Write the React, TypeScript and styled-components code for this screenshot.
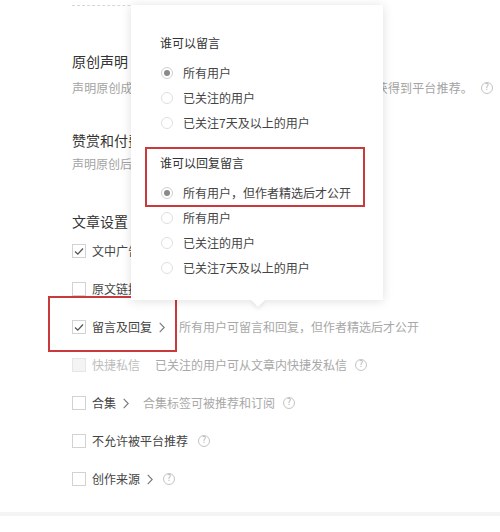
import React from "react";
import styled, { createGlobalStyle } from "styled-components";

const Global = createGlobalStyle`
  html, body { margin: 0; padding: 0; background: #fff; }
  body { font-family: "Noto Sans CJK SC", "Noto Sans", sans-serif; }
  * { box-sizing: border-box; }
`;

const Page = styled.div`
  position: relative;
  width: 500px;
  height: 532px;
  overflow: hidden;
  background: #fff;
`;

const Content = styled.div`
  padding-left: 72px;
  display: flex;
  flex-direction: column;
  align-items: flex-start;
`;

const TopLine = styled.div`
  width: 310px;
  height: 6px;
  border-bottom: 1px dashed #d6d6d6;
`;

const Title = styled.div<{ $mt: number }>`
  margin-top: ${(p) => p.$mt}px;
  font-size: 14px;
  line-height: 20px;
  color: #333;
`;

const Desc = styled.div<{ $mt: number; $ls?: number }>`
  margin-top: ${(p) => p.$mt}px;
  display: flex;
  align-items: center;
  font-size: 12px;
  line-height: 18px;
  letter-spacing: ${(p) => p.$ls ?? 0}px;
  color: #a3a3a3;
  white-space: nowrap;
`;

const Rows = styled.div`
  margin-top: 1px;
  display: flex;
  flex-direction: column;
`;

const Row = styled.div`
  position: relative;
  height: 38px;
  display: flex;
  align-items: center;
  white-space: nowrap;
`;

const Box = styled.span<{ $checked?: boolean; $disabled?: boolean }>`
  width: 14px;
  height: 14px;
  flex: none;
  border: 1px solid ${(p) => (p.$disabled ? "#e6e6e6" : "#d2d2d2")};
  background: ${(p) => (p.$disabled ? "#f4f4f4" : "#fff")};
  display: flex;
  align-items: center;
  justify-content: center;
`;

const Label = styled.span<{ $disabled?: boolean }>`
  margin-left: 6px;
  font-size: 12px;
  line-height: 18px;
  color: ${(p) => (p.$disabled ? "#bdbdbd" : "#444")};
`;

const RowDesc = styled.span<{ $ml: number }>`
  margin-left: ${(p) => p.$ml}px;
  font-size: 12px;
  line-height: 18px;
  color: #a8a8a8;
`;

const ChevronWrap = styled.span`
  margin-left: 7px;
  display: inline-flex;
  align-items: center;
`;

const Help = styled.span<{ $ml: number }>`
  margin-left: ${(p) => p.$ml}px;
  width: 12px;
  height: 12px;
  border: 1px solid #c4c4c4;
  border-radius: 50%;
  color: #b0b0b0;
  font-size: 8px;
  line-height: 10px;
  letter-spacing: 0;
  text-align: center;
  font-family: "DejaVu Sans", sans-serif;
  flex: none;
`;

const Highlight = styled.div<{ $top: number; $left: number; $w: number; $h: number }>`
  position: absolute;
  top: ${(p) => p.$top}px;
  left: ${(p) => p.$left}px;
  width: ${(p) => p.$w}px;
  height: ${(p) => p.$h}px;
  border: 2px solid #c93a3c;
  pointer-events: none;
`;

const Footer = styled.div`
  margin-top: 14px;
  height: 4px;
  background: #f4f4f4;
`;

const Popover = styled.div`
  position: absolute;
  left: 131px;
  top: 5px;
  width: 252px;
  padding: 29px 0 20px 29px;
  background: #fff;
  box-shadow: 0 1px 10px rgba(0, 0, 0, 0.13);
  display: flex;
  flex-direction: column;
`;

const Arrow = styled.div`
  position: absolute;
  left: 122px;
  bottom: -5px;
  width: 10px;
  height: 10px;
  background: #fff;
  transform: rotate(45deg);
  box-shadow: 2px 2px 4px rgba(0, 0, 0, 0.07);
`;

const Group = styled.div<{ $mt: number }>`
  position: relative;
  margin-top: ${(p) => p.$mt}px;
  display: flex;
  flex-direction: column;
`;

const GroupTitle = styled.div`
  font-size: 12px;
  line-height: 18px;
  color: #333;
  margin-bottom: 8px;
`;

const Option = styled.div`
  height: 25px;
  display: flex;
  align-items: center;
  font-size: 12px;
  color: #444;
  white-space: nowrap;
`;

const Radio = styled.span<{ $on?: boolean }>`
  width: 12px;
  height: 12px;
  margin-left: 1px;
  margin-right: 10px;
  border-radius: 50%;
  border: 1px solid ${(p) => (p.$on ? "#cfcfcf" : "#e0e0e0")};
  display: flex;
  align-items: center;
  justify-content: center;
  flex: none;
  &::after {
    content: "";
    width: 6px;
    height: 6px;
    border-radius: 50%;
    background: ${(p) => (p.$on ? "#8a8a8a" : "transparent")};
  }
`;

const Check = () => (
  <svg width="10" height="9" viewBox="0 0 10 9">
    <path d="M1 4.6 L3.8 7.2 L9 1.5" fill="none" stroke="#555" strokeWidth="1.3" />
  </svg>
);

const Chevron = () => (
  <ChevronWrap>
    <svg width="6" height="11" viewBox="0 0 6 11">
      <path d="M0.7 0.8 L5.2 5.5 L0.7 10.2" fill="none" stroke="#777" strokeWidth="1.1" />
    </svg>
  </ChevronWrap>
);

type Opt = { text: string; on?: boolean };

const RadioGroup = ({ title, options, mt, children }: { title: string; options: Opt[]; mt: number; children?: React.ReactNode }) => (
  <Group $mt={mt}>
    {children}
    <GroupTitle>{title}</GroupTitle>
    {options.map((o) => (
      <Option key={o.text}>
        <Radio $on={o.on} />
        {o.text}
      </Option>
    ))}
  </Group>
);

export default function App() {
  return (
    <Page>
      <Global />
      <Content>
        <TopLine />
        <Title $mt={45}>原创声明</Title>
        <Desc $mt={8} $ls={0.15}>
          声明原创成功后，文章将显示原创标识，且有更多的机会获得到平台推荐。
          <Help $ml={8}>?</Help>
        </Desc>
        <Title $mt={33}>赞赏和付费</Title>
        <Desc $mt={5}>声明原创后可开启赞赏和付费功能</Desc>
        <Title $mt={38}>文章设置</Title>
        <Rows>
          <Row>
            <Box $checked><Check /></Box>
            <Label>文中广告</Label>
          </Row>
          <Row>
            <Box />
            <Label>原文链接</Label>
          </Row>
          <Row>
            <Highlight $top={-12} $left={-24} $w={129} $h={56} />
            <Box $checked><Check /></Box>
            <Label>留言及回复</Label>
            <Chevron />
            <RowDesc $ml={14}>所有用户可留言和回复，但作者精选后才公开</RowDesc>
          </Row>
          <Row>
            <Box $disabled />
            <Label $disabled>快捷私信</Label>
            <RowDesc $ml={15}>已关注的用户可从文章内快捷发私信</RowDesc>
            <Help $ml={8}>?</Help>
          </Row>
          <Row>
            <Box />
            <Label>合集</Label>
            <Chevron />
            <RowDesc $ml={14}>合集标签可被推荐和订阅</RowDesc>
            <Help $ml={8}>?</Help>
          </Row>
          <Row>
            <Box />
            <Label>不允许被平台推荐</Label>
            <Help $ml={10}>?</Help>
          </Row>
          <Row>
            <Box />
            <Label>创作来源</Label>
            <Chevron />
            <Help $ml={10}>?</Help>
          </Row>
        </Rows>
      </Content>
      <Footer />

      <Popover>
        <RadioGroup
          mt={0}
          title="谁可以留言"
          options={[{ text: "所有用户", on: true }, { text: "已关注的用户" }, { text: "已关注7天及以上的用户" }]}
        />
        <RadioGroup
          mt={19}
          title="谁可以回复留言"
          options={[
            { text: "所有用户，但作者精选后才公开", on: true },
            { text: "所有用户" },
            { text: "已关注的用户" },
            { text: "已关注7天及以上的用户" },
          ]}
        >
          <Highlight $top={-7} $left={-15} $w={220} $h={60} />
        </RadioGroup>
        <Arrow />
      </Popover>
    </Page>
  );
}
